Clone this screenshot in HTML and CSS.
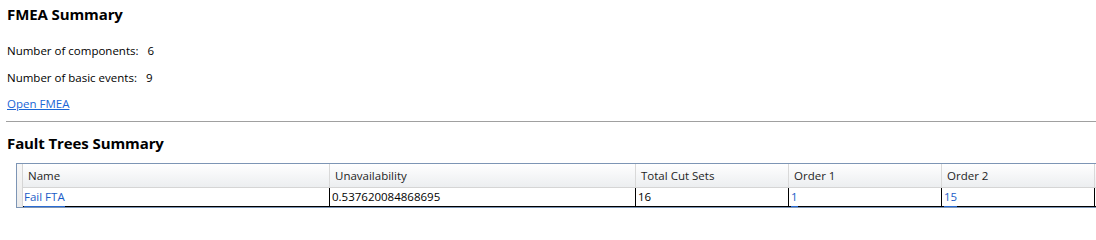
FILE: index.html
```html
<!DOCTYPE html>
<html>
<head>
<meta charset="utf-8">
<link rel="stylesheet" href="styles.css">
</head>
<body>
<div class="page">
  <h2 class="title">FMEA Summary</h2>
  <div class="stat"><span class="label">Number of components:</span><span class="value">6</span></div>
  <div class="stat stat2"><span class="label">Number of basic events:</span><span class="value">9</span></div>
  <a class="link" href="#">Open FMEA</a>
  <div class="rule"></div>
  <h2 class="title title2">Fault Trees Summary</h2>
  <div class="grid">
    <div class="rowhead"></div>
    <div class="cols">
      <div class="hrow">
        <div class="hc c1">Name</div>
        <div class="hc c2">Unavailability</div>
        <div class="hc c3">Total Cut Sets</div>
        <div class="hc c3">Order 1</div>
        <div class="hc c3">Order 2</div>
        <div class="hc filler"></div>
      </div>
      <div class="drow">
        <div class="dc c1 blue"><span class="lk">Fail FTA</span></div>
        <div class="dc c2">0.537620084868695</div>
        <div class="dc c3">16</div>
        <div class="dc c3 blue"><span class="lk">1</span></div>
        <div class="dc c3 blue"><span class="lk">15</span></div>
        <div class="dc filler"></div>
      </div>
    </div>
  </div>
</div>
</body>
</html>
```
FILE: styles.css
```css
html, body {
  margin: 0;
  padding: 0;
  background: #ffffff;
}
body {
  font-family: "Open Sans", "Noto Sans", sans-serif;
  color: #000000;
  width: 1096px;
  height: 229px;
  overflow: hidden;
}
.page {
  padding: 4px 0 0 7px;
}
.title {
  margin: 0;
  font-size: 15px;
  font-weight: 700;
  line-height: 20px;
  letter-spacing: -0.1px;
}
.stat {
  margin-top: 19px;
  font-size: 11.5px;
  line-height: 16px;
  display: flex;
}
.stat2 {
  margin-top: 11px;
}
.label {
  margin-right: 9px;
}
.link {
  display: inline-block;
  margin-top: 10px;
  font-size: 11.5px;
  line-height: 16px;
  color: #1a66d6;
  text-decoration: underline;
}
.rule {
  margin: 8px 0 0 -1px;
  height: 1px;
  background: #a0a0a0;
}
.title2 {
  margin-top: 11px;
}
.grid {
  margin: 10px 0 0 9px;
  display: flex;
  border-top: 1px solid #7d95b5;
  border-left: 1px solid #7d95b5;
  border-bottom: 1px solid #7d95b5;
  font-size: 11.5px;
}
.rowhead {
  flex: 0 0 5px;
  background: linear-gradient(#f7f7f7, #ebebeb);
  border-right: 1px solid #d5d5d5;
}
.cols {
  display: flex;
  flex-direction: column;
  flex: 0 0 auto;
}
.hrow {
  display: flex;
  height: 23px;
  background: linear-gradient(#ffffff, #f7f8f9 40%, #eceef0);
  border-bottom: 1px solid #d5d5d5;
}
.hc {
  box-sizing: border-box;
  padding: 1px 0 0 5px;
  line-height: 22px;
  color: #1e1e1e;
  border-right: 1px solid #d9d9d9;
  flex: 0 0 auto;
}
.drow {
  display: flex;
  height: 18px;
  border-bottom: 1px solid #000000;
}
.dc {
  box-sizing: border-box;
  padding-left: 2px;
  line-height: 18px;
  border-right: 1px solid #000000;
  flex: 0 0 auto;
}
.c1 { width: 307px; }
.c2 { width: 306px; }
.c3 { width: 153px; }
.filler { width: 30px; border-right: none; }
.dc.c1 { padding-left: 1px; }
.blue { color: #1b5cc7; }
.lk {
  display: inline-block;
  height: 18px;
  box-shadow: 0 1px 0 #2a6ad0;
}
```
